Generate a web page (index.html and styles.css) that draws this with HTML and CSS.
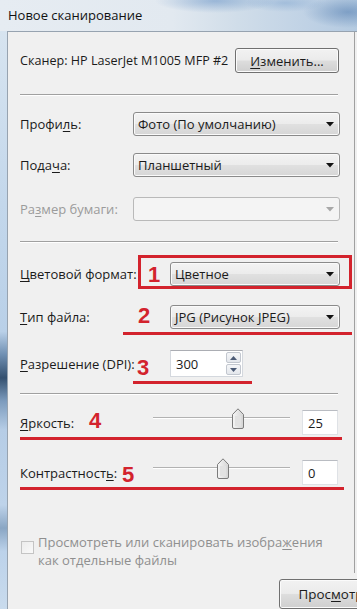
FILE: index.html
```html
<!DOCTYPE html>
<html lang="ru">
<head>
<meta charset="utf-8">
<title>Новое сканирование</title>
<link rel="stylesheet" href="styles.css">
</head>
<body>
<div class="window">
  <div class="titlebar"><span class="title">Новое сканирование</span></div>
  <div class="frame">
    <div class="edge"></div>
    <div class="client">
      <div class="pane">
        <div class="row row-scanner">
          <span class="label label-scanner">Сканер: HP LaserJet M1005 MFP #2</span>
          <button class="btn btn-change"><u>И</u>зменить...</button>
        </div>
        <div class="sep sep-1"></div>

        <div class="row row-profile">
          <span class="label">Профи<u>л</u>ь:</span>
          <div class="combo combo-wide"><span>Фото (По умолчанию)</span><svg class="arrow" width="8" height="5" viewBox="0 0 8 5"><path d="M0 0H8L4 4.5Z"/></svg></div>
        </div>
        <div class="row row-feed">
          <span class="label">Пода<u>ч</u>а:</span>
          <div class="combo combo-wide"><span>Планшетный</span><svg class="arrow" width="8" height="5" viewBox="0 0 8 5"><path d="M0 0H8L4 4.5Z"/></svg></div>
        </div>
        <div class="row row-paper">
          <span class="label label-disabled">Ра<u>з</u>мер бумаги:</span>
          <div class="combo combo-wide combo-disabled"><span></span><svg class="arrow" width="8" height="5" viewBox="0 0 8 5"><path d="M0 0H8L4 4.5Z"/></svg></div>
        </div>
        <div class="sep sep-2"></div>

        <div class="row row-color">
          <span class="label"><u>Ц</u>ветовой формат:</span>
          <div class="combo combo-narrow"><span>Цветное</span><svg class="arrow" width="8" height="5" viewBox="0 0 8 5"><path d="M0 0H8L4 4.5Z"/></svg></div>
        </div>
        <div class="row row-type">
          <span class="label"><u>Т</u>ип файла:</span>
          <div class="combo combo-narrow"><span>JPG (Рисунок JPEG)</span><svg class="arrow" width="8" height="5" viewBox="0 0 8 5"><path d="M0 0H8L4 4.5Z"/></svg></div>
        </div>
        <div class="row row-dpi">
          <span class="label"><u>Р</u>азрешение (DPI):</span>
          <div class="spin-wrap">
            <div class="spin">
              <span class="spin-value">300</span>
              <div class="spin-btns">
                <div class="spin-btn"><svg width="7" height="4" viewBox="0 0 7 4"><path d="M0 4H7L3.5 0Z"/></svg></div>
                <div class="spin-btn"><svg width="7" height="4" viewBox="0 0 7 4"><path d="M0 0H7L3.5 4Z"/></svg></div>
              </div>
            </div>
          </div>
        </div>
        <div class="sep sep-3"></div>

        <div class="row row-bright">
          <span class="label"><u>Я</u>ркость:</span>
          <div class="slider">
            <div class="track"></div>
            <svg class="thumb" style="left: 79px" width="12" height="21" viewBox="0 0 12 21"><defs><linearGradient id="tg1" x1="0" y1="0" x2="1" y2="0"><stop offset="0" stop-color="#f6f6f6"/><stop offset="1" stop-color="#d4d4d4"/></linearGradient></defs><path d="M0.5 6.5 L6 0.8 L11.5 6.5 V19 Q11.5 20.5 10 20.5 H2 Q0.5 20.5 0.5 19 Z" fill="url(#tg1)" stroke="#7b7b7b"/><path d="M3 8 H9 V18 H3 Z" fill="#e2e2e2"/></svg>
          </div>
          <div class="field">25</div>
        </div>
        <div class="row row-contrast">
          <span class="label">Контрастност<u>ь</u>:</span>
          <div class="slider">
            <div class="track"></div>
            <svg class="thumb" style="left: 64px" width="12" height="21" viewBox="0 0 12 21"><defs><linearGradient id="tg2" x1="0" y1="0" x2="1" y2="0"><stop offset="0" stop-color="#f6f6f6"/><stop offset="1" stop-color="#d4d4d4"/></linearGradient></defs><path d="M0.5 6.5 L6 0.8 L11.5 6.5 V19 Q11.5 20.5 10 20.5 H2 Q0.5 20.5 0.5 19 Z" fill="url(#tg2)" stroke="#7b7b7b"/><path d="M3 8 H9 V18 H3 Z" fill="#e2e2e2"/></svg>
          </div>
          <div class="field">0</div>
        </div>

        <div class="check-row">
          <span class="checkbox"></span>
          <span class="check-text">Просмотреть или сканировать изобра<u>ж</u>ения<br>как отдельные файлы</span>
        </div>

        <div class="annot">
          <div class="mark-box"></div>
          <span class="num num-1">1</span>
          <span class="num num-2">2</span>
          <div class="uline uline-2"></div>
          <span class="num num-3">3</span>
          <div class="uline uline-3"></div>
          <span class="num num-4">4</span>
          <div class="uline uline-4"></div>
          <span class="num num-5">5</span>
          <div class="uline uline-5"></div>
        </div>
      </div>
      <div class="bottom">
        <button class="btn btn-preview">Прос<u>м</u>отр</button>
      </div>
    </div>
  </div>
</div>
</body>
</html>
```

FILE: styles.css
```css
* { box-sizing: border-box; }
html, body { margin: 0; padding: 0; }
body {
  width: 357px;
  height: 609px;
  overflow: hidden;
  background: #f0f0f0;
  font-family: "Open Sans", "Noto Sans", "Liberation Sans", sans-serif;
  font-size: 13px;
  color: #1b1b1b;
}
u { text-decoration-thickness: 1px; text-underline-offset: 2px; }

.window {
  width: 357px;
  height: 609px;
  display: grid;
  grid-template-rows: 31px 1fr;
  overflow: hidden;
}

.titlebar {
  display: flex;
  align-items: center;
  padding-left: 8px;
  background:
    radial-gradient(ellipse 60px 12px at 215px 1px, rgba(80,130,190,0.45), rgba(80,130,190,0) 100%),
    radial-gradient(ellipse 45px 16px at 348px 12px, rgba(70,115,170,0.5), rgba(70,115,170,0) 100%),
    radial-gradient(ellipse 40px 9px at 285px 3px, rgba(120,160,205,0.45), rgba(120,160,205,0) 100%),
    linear-gradient(to right, #e6ecf2 0%, #e2e9f0 45%, #d0dde9 62%, #c0d2e5 80%, #aec6de 100%);
}
.title {
  font-size: 13px;
  color: #111;
  padding-bottom: 1px;
}

.frame {
  display: flex;
  min-height: 0;
}
.edge {
  width: 7px;
  background:
    linear-gradient(to bottom, #d7e4f0 0%, #c3d7eb 30%, #b9d0e8 52%, #6f8fb2 56%, #34506f 60%, #7c9bbd 64%, #b6cde6 69%, #bed3ea 82%, #8aa6c4 86%, #bcd2ea 90%, #c9dbed 100%);
}
.client {
  flex: 1;
  display: flex;
  flex-direction: column;
  border-top: 1px solid #97a3b0;
  border-left: 1px solid #97a3b0;
  background: #f0f0f0;
  min-width: 0;
}

.pane {
  position: relative;
  width: 347px;
  height: 541px;
  border-right: 1px solid #a0a0a0;
  padding: 16px 14px 0 12px;
  display: flex;
  flex-direction: column;
}

.row {
  display: flex;
  align-items: center;
  justify-content: space-between;
}
.label { white-space: nowrap; }
.label-scanner { font-size: 12.6px; }
.label-disabled { color: #9b9b9b; }

.row-scanner { height: 25px; }
.row-profile { margin-top: 16px; height: 24px; }
.row-feed { margin-top: 17px; height: 24px; }
.row-paper { margin-top: 20px; height: 24px; }
.row-color { margin-top: 19px; height: 24px; }
.row-type { margin-top: 19px; height: 24px; }
.row-dpi { margin-top: 21px; height: 27px; }
.row-bright { margin-top: 15px; height: 25px; }
.row-contrast { margin-top: 25px; height: 25px; }

.sep {
  height: 2px;
  border-top: 1px solid #a0a0a0;
  border-bottom: 1px solid #ffffff;
}
.sep-1 { margin-top: 21px; margin-right: 2px; }
.sep-2 { margin-top: 20px; margin-right: 2px; }
.sep-3 { margin-top: 16px; margin-right: 2px; }

.btn {
  font-family: inherit;
  font-size: 13px;
  color: #1b1b1b;
  border: 1px solid #707070;
  border-radius: 3px;
  background: linear-gradient(to bottom, #f2f2f2 0%, #ebebeb 48%, #dddddd 52%, #cfcfcf 100%);
  box-shadow: inset 0 0 0 1px #fbfbfb;
  padding: 0;
}
.btn-change {
  width: 104px;
  height: 25px;
  margin-right: 1px;
}

.combo {
  height: 24px;
  display: flex;
  align-items: center;
  justify-content: space-between;
  padding: 0 5px 0 4px;
  border: 1px solid #8a8a8a;
  border-radius: 3px;
  background: linear-gradient(to bottom, #f3f3f3 0%, #ececec 48%, #e0e0e0 52%, #d6d6d6 100%);
  box-shadow: inset 0 0 0 1px #fafafa;
  white-space: nowrap;
}
.combo .arrow { fill: #111; flex: none; }
.combo-wide { width: 207px; }
.combo-narrow { width: 170px; }
.combo-disabled {
  border-color: #b9b9b9;
  background: #f4f4f4;
  box-shadow: none;
}
.combo-disabled .arrow { fill: #a8a8a8; }

.spin-wrap { width: 170px; }
.spin {
  width: 73px;
  height: 27px;
  display: flex;
  align-items: center;
  justify-content: space-between;
  background: #fff;
  border: 1px solid #d4d8de;
  border-top-color: #abadb3;
  padding-left: 5px;
}
.spin-btns {
  display: flex;
  flex-direction: column;
  gap: 1px;
  padding: 1px 1px 1px 0;
  height: 100%;
}
.spin-btn {
  width: 15px;
  flex: 1;
  display: flex;
  align-items: center;
  justify-content: center;
  border: 1px solid #c2c7cf;
  border-radius: 2px;
  background: linear-gradient(to bottom, #f5f6f8, #e4e7ec);
}
.spin-btn svg { fill: #4b5a75; }

.slider {
  position: relative;
  width: 137px;
  height: 21px;
  align-self: flex-start;
  margin-top: -2px;
  margin-left: auto;
  margin-right: 12px;
}
.track {
  position: absolute;
  left: 0;
  right: 0;
  top: 9px;
  height: 2px;
  border-top: 1px solid #b2b2b2;
  border-bottom: 1px solid #ffffff;
}
.thumb { position: absolute; top: 0; }

.field {
  width: 36px;
  height: 25px;
  margin-right: 2px;
  background: #fff;
  border: 1px solid #dfe2e6;
  border-top-color: #b9bcc2;
  padding-left: 5px;
  display: flex;
  align-items: center;
}

.check-row {
  display: flex;
  align-items: flex-start;
  margin-top: 48px;
  color: #8f8f8f;
}
.checkbox {
  width: 13px;
  height: 13px;
  margin-top: 8px;
  margin-left: 1px;
  border: 1px solid #c4c4c4;
  background: linear-gradient(to bottom right, #ececec, #f9f9f9);
  flex: none;
}
.check-text {
  margin-left: 4px;
  line-height: 18px;
  font-size: 13px;
}

.bottom {
  flex: 1;
  padding-top: 6px;
  padding-left: 271px;
}
.btn-preview {
  width: 104px;
  height: 30px;
  display: block;
  font-size: 13.4px;
}

.annot {
  position: absolute;
  inset: 0;
  pointer-events: none;
  font-family: "Liberation Sans", Arial, sans-serif;
  font-weight: bold;
  color: #d3232d;
}
.mark-box {
  position: absolute;
  left: 130px;
  top: 223px;
  width: 214px;
  height: 34px;
  border: 3px solid #d3232d;
}
.num {
  position: absolute;
  font-size: 22px;
  line-height: 22px;
}
.num-1 { left: 140px; top: 232px; }
.num-2 { left: 130px; top: 273px; }
.num-3 { left: 129px; top: 325px; }
.num-4 { left: 81px; top: 378px; }
.num-5 { left: 114px; top: 432px; }
.uline {
  position: absolute;
  height: 3px;
  background: #d3232d;
}
.uline-2 { left: 115px; top: 300px; width: 229px; }
.uline-3 { left: 125px; top: 349px; width: 119px; }
.uline-4 { left: 12px; top: 405px; width: 322px; }
.uline-5 { left: 12px; top: 455px; width: 324px; }
```
